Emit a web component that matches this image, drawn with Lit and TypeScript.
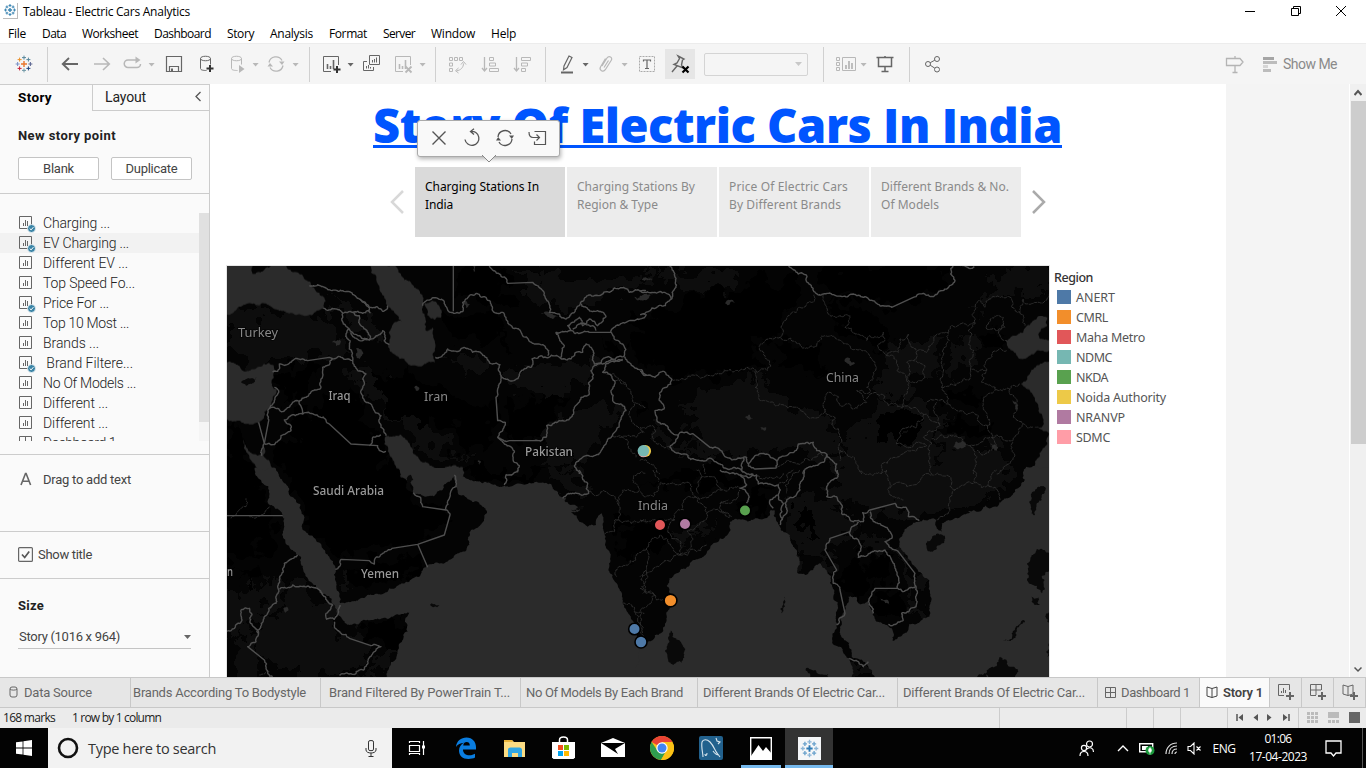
import { LitElement, html, svg, css } from "lit";
import { customElement, property } from "lit/decorators.js";

/** A single-line label whose tracking is adjusted so it spans `w` pixels. */
@customElement("fit-label")
class FitLabel extends LitElement {
  @property() text = "";
  @property({ type: Number }) w = 0;
  static styles = css`
    :host { display: inline-block; white-space: pre; }
  `;
  render() {
    return html`<span>${this.text}</span>`;
  }
  updated() {
    const s = this.renderRoot.querySelector("span") as HTMLElement;
    s.style.letterSpacing = "0px";
    const n = s.getBoundingClientRect().width;
    if (this.w && this.text.length) s.style.letterSpacing = `${((this.w - n) / this.text.length).toFixed(3)}px`;
  }
}

const t = (text: string, w: number) => html`<fit-label .text=${text} .w=${w}></fit-label>`;

/* ---------- map data, one sheet per quadrant at 3 units per pixel ---------- */
interface Sheet { at: string; sea: string[]; isle: string[]; lake: string[]; dark: string[]; lit: string[]; border: string[]; state: string[]; }

const sheets: Sheet[] = [
  {
    at: "translate(-1,-2) scale(.33333)",
    sea: [
      "0,0 78,0 80,30 110,22 130,10 135,5 180,5 185,15 215,25 235,45 258,68 285,95 300,110 295,133 262,150 225,153 190,148 165,140 130,125 105,120 75,118 40,128 15,150 0,152",
      "0,295 25,298 45,315 70,320 100,308 130,297 142,303 147,320 140,345 143,375 150,375 140,400 132,430 115,445 105,470 85,478 60,480 40,470 15,470 0,465",
      "435,0 508,0 515,15 525,30 555,55 580,80 592,110 590,130 598,160 600,200 620,190 622,215 628,240 628,297 600,300 570,305 545,298 535,285 510,275 492,262 490,235 488,205 505,175 528,172 515,155 495,135 480,110 465,85 455,60 450,35 435,25",
      "595,118 620,110 635,122 648,145 645,160 625,167 605,155",
      "480,515 525,512 545,530 555,550 570,575 590,595 620,608 650,615 690,605 712,610 712,640 525,640 505,600 490,570 475,540",
      "47,520 60,545 80,570 95,575 104,572 112,540 116,540 112,572 130,590 150,620 155,640 95,640 88,605 70,580 55,555",
    ],
    isle: ["45,355 60,345 85,348 92,340 82,358 60,365"],
    lake: ["318,235 335,228 345,232 330,245", "388,250 400,255 408,275 400,285 390,270", "565,370 572,365 580,375 570,380", "712,118 722,112 732,122 720,132", "945,150 975,150 995,158 965,158", "740,5 752,5 748,25", "1225,98 1260,92 1260,108 1240,108", "755,590 765,595 760,602"],
    dark: ["150,330 280,320 280,370 160,430", "240,420 400,400 450,500 480,560 470,640 170,640 180,520", "440,340 560,300 640,380 780,420 800,560 700,560 600,480 470,420", "640,150 700,150 790,150 860,260 760,240 660,220", "690,5 780,5 840,60 860,130 740,80 690,110", "830,400 960,380 1030,400 960,500 840,520", "1110,220 1180,230 1180,270 1120,270", "0,500 60,560 90,640 0,640"],
    lit: ["0,160 80,130 250,160 340,160 360,260 200,290 60,300 0,260", "860,40 1260,20 1260,70 1150,80 1020,160 900,60", "380,300 480,360 560,440 640,520 760,590 640,580 520,500 440,420", "640,270 760,280 800,330 700,340", "880,300 1080,290 1080,370 950,400 860,360", "970,490 1100,430 1180,430 1100,560 1000,620 940,600", "260,70 420,130 460,230 380,200 350,150"],
    border: [
      "250,65 275,62 300,72 350,80 380,92 400,105 420,120 430,130 470,142 485,125",
      "292,133 330,135 350,148 380,145 410,148 425,140 432,146 400,105",
      "350,148 352,180 370,195 360,210 370,255 380,290 395,320 420,330 410,345 415,360 405,380 415,410 440,430 465,455 465,490 480,515",
      "370,195 395,215 430,228 450,215 470,200 475,230 490,242",
      "380,145 400,155 398,175 412,190 425,205 430,228", "375,205 392,224 425,228",
      "140,325 155,322 160,300 190,298 245,290 310,280 345,280 380,290",
      "320,282 290,310 285,345 285,370 240,400 220,412 170,443 145,430 130,430",
      "220,412 230,450 175,468 195,500 165,515 145,542 115,538",
      "230,450 265,452 310,480 375,540 455,545 460,560 480,562", "430,545 440,520 465,513",
      "145,370 158,380 145,410 133,430 128,470 115,538", "98,475 115,538 108,575",
      "590,125 610,108 635,103 655,115 668,142 710,143 710,115 730,95 752,88 780,100 795,120 800,140 830,145 855,185 890,215 925,240 968,260 965,275", "682,0 682,142",
      "790,5 820,30 845,58 920,55 950,80 960,105 970,145 1000,150 1020,165 1035,150 1060,125 1085,95 1120,95 1150,85 1165,72 1210,85 1260,80",
      "628,280 655,270 665,255 715,250 740,265 775,275 800,300 822,302 825,335 850,350 880,335 915,310 918,285 945,275 1005,285",
      "825,335 815,375 810,400 815,470 838,475 830,500 815,520 835,540 865,565 865,595 880,605 875,625",
      "815,520 850,530 925,530 960,520 962,485 1000,470 1035,460 1045,430 1065,400 1090,390 1088,360 1100,345 1095,320 1130,300 1150,290 1190,285",
      "1005,285 1035,285 1050,265 1070,265 1080,240 1095,250 1105,300 1140,280 1195,275 1190,240 1165,225 1155,205 1090,205 1035,200 1025,185 1060,160 1070,185 1090,165 1115,185 1140,158 1115,140 1085,135 1065,120",
      "1040,195 1060,180 1100,185 1110,200", "1035,200 990,205 1015,245 1005,285", "1155,205 1170,185 1200,175 1235,165 1260,150",
      "1195,278 1225,310 1260,335", "1190,290 1140,300 1130,325 1165,350 1155,380 1160,410 1200,440 1180,475 1170,500 1140,540 1105,575 1070,580 1045,605 1060,630",
    ],
    state: ["1165,350 1215,390 1240,420 1260,430", "1225,420 1210,445 1225,480 1255,505", "1160,515 1190,520 1205,540 1215,560 1230,580", "1180,520 1230,520 1250,500", "1130,325 1165,330 1200,360"],
  },
  {
    at: "translate(413,-2) scale(.33333)",
    sea: [
      "1098,230 1120,215 1150,205 1175,175 1200,155 1222,160 1222,185 1195,210 1200,225 1240,235 1240,265 1190,260 1170,275 1150,285 1130,275 1110,255",
      "1240,290 1200,300 1170,330 1142,360 1170,380 1185,410 1195,440 1210,465 1205,490 1180,488 1225,505 1222,540 1205,560 1185,595 1160,640 1240,640",
    ],
    isle: [],
    lake: ["5,45 30,43 38,50 15,52", "0,95 40,92 20,108 0,108", "255,118 270,108 285,116 262,124", "615,285 630,283 645,298 632,306", "315,460 330,452 340,464 328,468", "360,490 382,488 372,500", "940,550 970,530 978,540 955,556", "1050,540 1070,540 1072,560 1058,552", "1118,408 1135,425 1128,438"],
    dark: ["100,110 380,60 500,100 430,170 410,220 350,240 380,310 240,330 100,340 0,300 0,160", "520,0 930,0 930,70 760,120 560,90", "560,120 680,160 740,250 660,220 600,200", "400,230 540,250 560,310 400,320", "720,470 780,455 840,470 830,530 740,530", "910,380 1020,400 1000,430 930,410", "1020,200 1090,200 1080,270 1020,260", "0,390 40,440 40,460 0,450", "930,460 1040,480 1040,520 940,510"],
    lit: ["120,420 340,340 480,440 560,450 600,560 440,570 380,560 260,560 140,500", "0,10 90,10 300,30 260,80 120,90 100,60", "700,410 860,420 920,500 900,600 860,640 600,640 610,540 720,430", "1090,10 1228,10 1228,90 1050,100 1000,130", "740,250 900,230 900,340 800,400 700,370", "30,480 100,520 260,590 220,600 120,560 60,540", "930,520 1100,560 1130,610 1080,640 900,640", "920,220 990,200 990,300 920,340"],
    border: [
      "85,0 100,20 108,70 95,105 50,130 0,152", "0,80 45,85 95,105",
      "445,5 475,30 500,35 515,70 528,88 550,90 610,97 640,90 680,100 710,118 755,130 820,100 880,98 920,75 945,50 932,30 940,0",
      "0,322 15,335 45,340 75,325 95,345 80,370 60,385 58,410 72,435 45,440 55,475 85,495 115,515 120,505 160,510 210,550 260,580 320,580 325,605 345,575 380,570 410,590 440,575 475,540 520,535 530,560 560,570 590,600 592,630",
      "960,5 990,14 1003,8", "115,515 90,550 130,570 180,590 230,595 270,615 305,620 310,580", "305,620 340,630", "325,605 345,615 408,612 410,590", "490,630 520,605 550,595 560,570",
    ],
    state: [
      "95,345 130,345 190,340 240,330 270,315 320,310 382,320 388,290 375,275 362,240 420,220 440,165 480,130 520,115 522,92",
      "345,320 345,370 360,410 410,425 480,435 505,460 540,455 555,435 585,460 598,510 600,560",
      "550,92 565,150 590,160 630,155 615,190 645,210 680,230 690,215 730,205 735,225 715,250 740,275 770,290 770,320 800,345 800,390 785,430",
      "420,220 480,240 530,248 545,215 590,225 620,240 660,255 690,280 705,320 680,370 690,385 650,380 670,400 680,415 640,435 600,425 570,385 555,400 555,435",
      "680,405 705,385 735,395 745,425 785,430 850,450 900,485 870,500 850,520 875,540 870,600 875,630",
      "740,275 775,265 780,225 805,210 810,240 830,262 860,265 880,235 925,205 915,250 905,300 905,370 925,420 960,440 1000,445 1050,480 1055,520 1060,550",
      "830,262 820,290 855,305 855,340 820,355 800,345 800,295 820,290", "905,370 960,355 990,345 992,315 1040,320 1025,355 1065,370 1110,375 1140,360",
      "992,315 1000,270 990,230 1005,180 1005,130 1020,110 1035,130 1090,100 1110,100 1115,130 1140,145 1150,105 1165,120 1228,90",
      "925,205 960,180 1005,175", "1040,195 1050,165 1070,155 1090,160 1095,190 1070,200 1040,195", "1090,180 1075,200 1085,225 1103,235", "1140,145 1155,185", "1040,320 1040,290 1100,260",
      "1065,370 1030,400 1030,430 1050,480", "1110,375 1130,430 1120,460 1150,480 1180,488", "1150,480 1115,540 1120,580 1090,610 1070,630",
      "850,450 830,490 780,510 770,540 800,550 860,545 830,560 780,575 725,600 725,630", "875,525 940,515 990,545 1055,520 1115,530", "990,545 1005,590 1000,630", "1060,550 1010,560",
      "600,560 620,570 650,600 665,630", "600,560 600,590", "0,490 30,485 40,530 90,550", "860,415 915,415 925,420", "890,415 880,440 900,485", "0,590 30,600 60,630", "190,600 195,630", "410,610 470,600 520,580 550,575",
    ],
  },
  {
    at: "translate(-1,204) scale(.33333)",
    sea: [
      "520,-6 700,-6 712,20 750,33 790,38 835,47 870,42 905,42 960,38 975,42 980,55 995,65 1000,78 1020,82 1015,92 1035,105 1075,108 1060,122 1035,128 1060,155 1085,170 1110,165 1120,135 1127,130 1130,165 1138,220 1150,290 1172,340 1190,400 1215,440 1235,480 1245,520 1275,545 1275,640 463,640 490,590 515,540 545,485 550,428 530,432 500,440 470,445 440,450 400,460 370,465 350,450 335,430 325,402 342,400 395,392 440,375 490,355 550,335 580,320 600,292 655,280 695,250 730,225 732,195 735,180 750,175 775,145 783,125 770,110 755,95 725,88 700,75 690,50 684,18 650,60 625,78 600,80 565,75 545,35 530,22",
      "85,-6 148,-6 160,20 175,40 190,75 210,90 225,120 228,165 245,190 270,210 290,235 310,260 328,290 330,335 340,375 342,402 325,405 300,375 270,345 245,325 232,300 225,260 200,240 178,215 175,170 165,125 132,105 130,75 105,30",
    ],
    isle: ["545,20 555,15 562,30 560,65 548,62 542,40", "612,405 625,402 640,406 625,410", "1035,118 1065,118 1075,108 1050,124"],
    lake: ["172,415 182,410 188,420 178,428", "325,420 340,420 335,430"],
    dark: ["170,0 520,0 560,80 660,140 640,190 480,230 340,260 240,160", "0,0 80,0 130,110 150,230 0,260", "420,460 540,440 540,480 480,540 400,500", "350,300 560,260 570,310 400,360", "0,280 110,320 80,360 0,340", "1190,150 1260,170 1260,260 1180,280", "700,0 960,0 950,35 790,30"],
    lit: ["0,380 80,340 150,330 150,400 90,480 0,480", "160,360 260,355 330,470 440,540 390,600 180,620 100,560 110,450", "0,490 60,480 80,560 120,630 0,630", "335,300 360,300 400,370 350,390", "240,80 270,150 330,240 270,200", "460,560 520,520 500,590 430,630 380,630", "980,0 1060,0 1080,60 1020,70"],
    border: [
      "3,137 170,137", "835,45 840,15 875,0", "562,68 590,110 660,120 672,135 655,195 575,223 498,235 470,250 445,282 430,272 345,268 340,290 328,298", "575,223 605,292", "660,120 670,85 680,55 690,50 685,15",
      "215,255 175,280 160,330 158,360 150,400 115,440 95,480 90,515 65,530 115,570 120,595 140,620", "160,357 200,345 260,352 290,375 320,405 300,430 302,448 325,448 342,405",
      "325,455 345,490 370,505 435,527 465,530 425,575 388,612 340,615", "0,483 15,482 48,450 45,420 70,415 72,455 95,490", "1010,85 1055,70 1088,70 1085,40 1065,10 1060,0",
    ],
    state: ["15,145 35,125 60,110 60,85", "70,140 95,140 130,110", "1088,62 1140,65 1178,105 1165,150 1165,185 1135,190", "1175,150 1215,160 1260,150", "1178,105 1190,60 1240,60 1220,30 1260,10", "1260,240 1230,270 1200,285 1175,295 1172,320", "1190,400 1225,425 1255,430", "1260,300 1245,330 1250,370", "1225,425 1240,460 1250,490", "100,615 130,605"],
  },
  {
    at: "translate(413,204) scale(.33333)",
    sea: [
      "-3,545 0,535 20,520 45,495 55,495 75,465 80,450 85,420 95,400 90,370 88,325 110,310 145,290 165,270 200,250 215,225 240,205 262,195 272,180 270,155 300,148 345,145 390,135 392,120 405,122 408,150 420,170 450,195 458,225 470,240 478,270 472,308 495,315 540,280 560,300 570,340 580,380 592,420 590,465 578,490 582,525 600,530 615,555 630,565 640,600 640,640 -3,640",
      "625,380 650,380 655,400 675,400 685,390 698,425 710,455 740,465 755,475 758,512 780,500 805,480 808,462 840,455 868,440 873,395 870,365 845,310 815,280 785,240 778,220 790,190 805,170 838,155 865,150 888,150 890,175 905,185 905,160 925,150 985,130 1010,125 1070,110 1090,90 1120,70 1140,50 1155,30 1158,-10 1240,-10 1240,640 725,640 695,600 670,575 640,565 635,540 610,505 600,480 605,465 600,440 615,420 622,400",
    ],
    isle: [
      "92,482 115,510 133,545 125,578 100,585 85,570 80,530 85,500", "858,220 880,197 915,197 910,220 880,243 860,235", "1172,75 1195,50 1210,48 1205,90 1185,135 1168,95",
      "1175,255 1190,238 1240,243 1240,300 1205,320 1205,370 1180,345 1162,310", "1040,600 1080,560 1110,590 1135,605 1120,640 1040,640", "1090,512 1125,480 1150,450 1155,455 1130,485 1100,510",
      "498,595 525,600 565,612 567,640 505,640", "433,380 434,400 430,420 424,430 429,405", "1173,380 1195,382 1200,405 1185,405", "1228,425 1220,430 1222,455 1230,460", "1226,520 1218,545 1222,560 1230,560",
      "995,640 1015,615 1040,610 1040,640",
    ],
    lake: ["720,385 735,390 748,405 735,400", "985,125 1005,122 1005,128"],
    dark: ["480,110 520,110 520,180 490,200", "670,260 735,250 765,300 750,340 680,340", "20,30 160,0 290,20 260,60 160,70", "0,170 90,160 100,200 20,240", "710,370 820,370 780,430 720,430", "300,70 400,60 380,130 330,140", "600,310 670,300 680,390 610,380"],
    lit: ["440,90 580,60 640,160 560,210 590,300 560,290 530,270 480,250 430,170", "570,0 1130,0 1080,90 880,140 700,110 600,90", "640,160 740,200 820,310 860,330 850,440 790,450 820,370 760,240 660,240", "100,170 250,160 190,220 120,240", "90,500 120,540 110,570 92,560", "870,210 900,205 890,230 870,230", "1180,260 1220,250 1215,300 1180,300", "645,570 690,600 700,640 650,640"],
    border: [
      "240,0 300,15 350,15 355,42 415,45 415,75 390,90 400,115", "300,15 320,45 300,55 325,75 320,100",
      "592,0 590,25 560,50 560,80 590,80 605,105 605,130 640,155 670,155 668,128 690,120 765,100 800,115 805,140 838,152",
      "493,0 480,60 440,90 440,130 425,150 420,165", "415,75 430,100 425,150", "655,155 630,185 570,205 555,240 590,300 580,340 600,360 615,430 590,465",
      "630,185 640,205 655,210 655,262 690,250 735,240 755,270 775,320 772,355 705,355 688,385 700,430", "690,125 700,155 750,185 755,205 735,215 775,245 825,310 828,350 790,365 772,355",
      "828,350 828,410 785,430 790,450 745,463", "628,565 655,575 670,590 685,575",
    ],
    state: [
      "0,65 40,80 60,40 100,40 155,50 165,80 215,75 240,60 300,55", "165,80 130,90 130,120 105,130 95,205 120,255", "0,150 50,155 105,150", "165,80 200,130 180,160 140,180 155,200 150,235 120,255",
      "120,255 60,285 20,310 0,320", "120,255 200,225", "20,310 20,240 40,205 80,205 95,230 120,255", "0,355 45,375 50,390 70,390", "45,375 20,410 0,425", "200,130 250,125 270,140", "170,0 180,30 175,70",
      "740,0 750,40 750,75 790,90", "750,55 820,45 880,15 930,20 930,50 945,60 930,120 890,150", "945,60 1000,40 1050,50 1080,90", "1000,0 1005,40", "1050,50 1070,0", "660,5 700,15 740,0", "480,0 450,30 440,70", "40,0 55,35",
      "350,15 400,25 430,10", "415,45 440,30 460,0", "20,310 5,350 20,370 45,375", "5,430 12,500", "245,60 215,20 180,25", "240,100 300,60", "275,140 240,100 265,90",
    ],
  },
];

type P = [number, number];
const noise = (a: number, b: number) => {
  const v = Math.sin(a * 12.9898 + b * 78.233) * 43758.5453;
  return (v - Math.floor(v)) * 2 - 1;
};
/** Midpoint displacement: turns coarse vertices into a ragged natural line. */
const ragged = (src: string, amp: number, maxLen: number, closed: boolean) => {
  const ps = src.split(" ").map((q) => q.split(",").map(Number) as P);
  if (closed) ps.push(ps[0]);
  const out: P[] = [ps[0]];
  const walk = (a: P, b: P, d: number) => {
    const dx = b[0] - a[0], dy = b[1] - a[1], len = Math.hypot(dx, dy);
    if (d === 0 || len < 5) { out.push(b); return; }
    const k = noise(a[0] + b[0], a[1] + b[1]) * amp;
    const m: P = [(a[0] + b[0]) / 2 - dy * k, (a[1] + b[1]) / 2 + dx * k];
    walk(a, m, d - 1);
    walk(m, b, d - 1);
  };
  for (let i = 1; i < ps.length; i++) {
    const len = Math.hypot(ps[i][0] - ps[i - 1][0], ps[i][1] - ps[i - 1][1]);
    walk(ps[i - 1], ps[i], len > maxLen ? 0 : 4);
  }
  return out.map((p) => `${p[0].toFixed(1)},${p[1].toFixed(1)}`).join(" ");
};

const pts = (list: string[], cls: string) => list.map((p) => svg`<polygon class=${cls} points=${ragged(p, cls === "sea" ? 0.2 : 0.28, 140, true)} />`);
const lines = (list: string[], cls: string) => list.map((p) => svg`<polyline class=${cls} points=${ragged(p, cls === "state" ? 0.27 : 0.2, cls === "state" ? 90 : 62, false)} />`);

const names: [string, number, number, number, string][] = [
  ["Turkey", 11, 71, 40, "nm"], ["Iraq", 101.5, 133.5, 22, "nm hi"], ["Iran", 197, 135, 24, "nm"], ["Pakistan", 298, 189.5, 48, "nm hi"],
  ["Saudi Arabia", 86, 229, 71, "nm hi"], ["Yemen", 134, 311.5, 38, "nm hi"], ["India", 411, 243.5, 30, "nm"], ["China", 599, 115.5, 33, "nm"], ["n", 0, 310, 6, "nm hi"],
];
const marks: [number, number, number, string][] = [
  [433, 259, 5, "#e15759"], [458, 258, 5, "#b07aa1"], [518, 244.5, 5, "#59a14f"], [443.5, 334.5, 5.6, "#f28e2b"], [407.5, 363, 5, "#4e79a7"], [414, 376, 5.2, "#4e79a7"],
];

@customElement("world-map")
class WorldMap extends LitElement {
  static styles = css`
    :host { display: block; width: 822px; height: 411px; overflow: hidden; background: #040404; }
    svg { display: block; }
    .sea { fill: #2b2b2b; }
    .isle { fill: #090909; }
    .lake { fill: #2b2b2b; }
    .dark { fill: #000; }
    .lit { fill: #0d0d0d; }
    .border { fill: none; stroke: #4f4f4f; stroke-width: 4.2; stroke-linejoin: round; }
    .state { fill: none; stroke: #303030; stroke-width: 2.8; stroke-dasharray: 12 2; }
    .nm { font: 13px "Noto Sans", sans-serif; fill: #888; stroke: #000; stroke-width: 2px; paint-order: stroke; stroke-opacity: .5; }
    .hi { fill: #999; font-weight: 500; }
    .mark { stroke: #000; stroke-width: 1.6; }
  `;
  render() {
    return html`<svg width="822" height="411" viewBox="0 0 822 411">
      <defs>
        <filter id="hills" filterUnits="userSpaceOnUse" x="-20" y="-20" width="870" height="450">
          <feTurbulence type="fractalNoise" baseFrequency="0.05" numOctaves="3" seed="9" result="n" />
          <feDisplacementMap in="SourceGraphic" in2="n" scale="45" xChannelSelector="R" yChannelSelector="G" />
        </filter>
      </defs>
      <g filter="url(#hills)">${sheets.map((s) => svg`<g transform=${s.at}>${pts(s.lit, "lit")}${pts(s.dark, "dark")}</g>`)}</g>
      ${sheets.map((s) => svg`<g transform=${s.at}>${pts(s.sea, "sea")}</g>`)}
      ${sheets.map((s) => svg`<g transform=${s.at}>${pts(s.isle, "isle")}${pts(s.lake, "lake")}${lines(s.state, "state")}${lines(s.border, "border")}</g>`)}
      ${names.map(([n, x, y, w, c]) => svg`<text class=${c} x=${x} y=${y} textLength=${w} lengthAdjust="spacingAndGlyphs">${n}</text>`)}
      <circle cx="417" cy="185" r="7" fill="#000" />
      <circle cx="418.2" cy="185" r="5.9" fill="#edc948" />
      <circle cx="416.3" cy="186" r="5.2" fill="#ff9da7" />
      <circle cx="416.4" cy="184.8" r="5.8" fill="#76b7b2" />
      ${marks.map(([x, y, r, c]) => svg`<circle class="mark" cx=${x} cy=${y} r=${r + 0.8} fill=${c} />`)}
    </svg>`;
  }
}

/* ---------- icons ---------- */
const ic = (body: unknown, w = 20, h = 20) => html`<svg width=${w} height=${h} viewBox="0 0 ${w} ${h}" fill="none" stroke="currentColor">${body}</svg>`;
const plus = (x: number, y: number, r: number, c: string, w = 1.3) => svg`<path d="M${x - r} ${y}h${r * 2}M${x} ${y - r}v${r * 2}" stroke=${c} stroke-width=${w} />`;
const logo = (cs: string[], big = 1) => ic(svg`
  ${plus(10, 10, 3, cs[0], 1.4 * big)}${plus(10, 3.6, 2, cs[1], big)}${plus(10, 16.4, 2, cs[2], big)}
  ${plus(3.6, 10, 2, cs[3], big)}${plus(16.4, 10, 2, cs[4], big)}
  ${plus(5.6, 5.6, 2, cs[5], big)}${plus(14.4, 5.6, 2, cs[6], big)}${plus(5.6, 14.4, 2, cs[7], big)}${plus(14.4, 14.4, 2, cs[8], big)}`);
const blue = Array(9).fill("#3f87b3");
const mixed = ["#e8762d", "#59879b", "#7099a6", "#7b91c7", "#5b6591", "#eb912c", "#59879b", "#c72037", "#1f447e"];

const caret = (cls = "") => html`<span class="cell caret ${cls}">${ic(svg`<path d="M.6 0h6L3.6 3.6z" fill="currentColor" stroke="none" />`, 7, 4)}</span>`;
const cell = (body: unknown, cls = "") => html`<span class="cell ${cls}">${body}</span>`;
const sep = html`<span class="cell"><i class="sep"></i></span>`;
const db = svg`<path d="M4.500 4.500c0-3 10-3 10 0s-10 3-10 0v10c0 1.600 3 2 6 2M14.500 4.500v6" />`;
const chart = svg`<path d="M10 17.500H2.500v-15h15V11" /><path d="M6.500 10v5M9.500 12v3M12.500 6v9" stroke-width="1.600" />`;

const icons = {
  back: ic(svg`<path d="M2.500 10H18M9 4l-6.300 6L9 16" stroke-width="1.800" />`),
  fwd: ic(svg`<path d="M2 10h15.500M11 4l6.300 6-6.300 6" stroke-width="1.600" />`),
  redo: ic(svg`<path d="M15 6H5a3.700 3.700 0 000 7.500h9a3.500 3.500 0 003.500-3.500" stroke-width="1.500" /><path d="M12.500 2.500l5 3.500-5 3.500z" fill="currentColor" stroke="none" />`),
  save: ic(svg`<path d="M2.500 2.500h15v15h-15zM5.500 17.500v-5h9v5" stroke-width="1.200" /><path d="M8 14.500v3" stroke-width="2" />`),
  dbAdd: ic(svg`${db}<path d="M14 11v7M10.500 14.500h7" stroke="#333" stroke-width="2" />`),
  dbRun: ic(svg`${db}<path d="M12 11l5.500 4-5.500 4z" fill="currentColor" stroke="none" />`),
  sync: ic(svg`<path d="M3 8.500a7 7 0 0113-2M17 11.500a7 7 0 01-13 2" stroke-width="1.300" /><path d="M13 7.500h5.500l-2.500 3.500zM1.500 12.500h5.500l-3-3.500z" fill="currentColor" stroke="none" />`),
  sheet: ic(svg`${chart}<path d="M16 12v7M12.500 15.500h7" stroke="#333" stroke-width="2" />`),
  dup: ic(svg`<path d="M8.500 1.500h10v9h-10z" /><path d="M6 7.500H2.500v9h10V13" /><path d="M11.500 6v2.500M13.500 5v3.500M15.500 3.500v5M5.500 12v2.500M7.500 11v3.500M9.500 13v1.500" />`),
  clear: ic(svg`${chart}<path d="M12.500 12.500l6 6M18.500 12.500l-6 6" stroke-width="1.800" />`),
  swap: ic(svg`<path d="M2.500 3.500h3v3h-3zM7.500 3.500h3v3h-3zM12.500 3.500h3v3h-3zM2.500 9h3v3h-3zM2.500 14.500h3v3h-3z" /><path d="M16.500 9.500c0 4-3 7-7 7.200" /><path d="M14 10.500l2.500-3 2.500 3M11.500 14l-3 2.700 3 2.300" />`),
  asc: ic(svg`<path d="M4.500 3v14M2 14l2.500 3L7 14" stroke-width="1.300" /><path d="M9.500 3.500h4v3h-4zM9.500 9h6v3h-6zM9.500 14.500h9v3h-9z" />`),
  desc: ic(svg`<path d="M4.500 3v14M2 14l2.500 3L7 14" stroke-width="1.300" /><path d="M9.500 3.500h9v3h-9zM9.500 9h6v3h-6zM9.500 14.500h4v3h-4z" />`),
  pen: ic(svg`<path d="M12 2l3 1.500-5 10-3.500 2.200.5-3.700z" stroke-width="1.200" /><path d="M4 18.500h12" stroke-width="2" />`),
  clip: ic(svg`<path d="M6 12l5-8c2-3 6-.5 4.300 2.200l-6 9.500c-2 3-6.500.5-4.800-2.700l5-8.500M8 13.500l4.500-7" stroke-width="1.200" />`),
  text: ic(svg`<path d="M2.500 2.500h15v15h-15z" stroke-dasharray="2 1" stroke="#aaa" /><path d="M6.500 7.500V6h7v1.500M10 6v8M8 14.500h4" stroke-width="1.200" />`),
  pin: ic(svg`<path d="M8 2l6 3-1.500 1-1 5 1.500 3-9-3.500 3-1.500 2.500-4.500zM7 12l-5 6" stroke-width="1.400" /><path d="M12.500 12.500l6 6M18.500 12.500l-6 6" stroke="#000" stroke-width="2.200" />`),
  cards: ic(svg`<path d="M.5 3.500h3v3h-3zM.5 8.500h3v3h-3zM.5 13.500h3v3h-3zM6.500 3.500h13v13h-13z" /><path d="M10 11v4M13 7v8M16 9v6" stroke-width="1.800" />`),
  present: ic(svg`<path d="M1.500 3.500h17M3.500 3.500v9h13v-9M10 2v2M10 12.500v5M6.500 17.500h7" stroke-width="1.500" />`),
  share: ic(svg`<circle cx="5" cy="10" r="2.500" /><circle cx="14" cy="5" r="2.500" /><circle cx="14" cy="15.500" r="2.500" /><path d="M7.200 8.700l4.600-2.500M7.200 11.200l4.600 3" />`),
  sign: ic(svg`<path d="M1.500 4.500H15l3 3.500-3 3.500H1.500zM10 2v2.500M10 11.500v6.500M7.500 18.500h5" stroke="#b4b4b4" stroke-width="1.300" />`),
  showme: ic(svg`<path d="M0 3.500h11" stroke="#a5a5a5" stroke-width="3" /><path d="M0 7.500h14M0 15.500h8" stroke="#bcbcbc" stroke-width="3" /><path d="M0 11.500h5" stroke="#d6d6d6" stroke-width="3" />`, 14, 18),
};

const row = (kind: "sheet" | "dash", used: boolean) => ic(svg`<path d="M.5 .5h12v12h-12z" stroke="#666" />
  ${kind === "sheet" ? svg`<path d="M4.500 7v3M6.500 4v6M8.500 5v5" stroke="#666" />` : svg`<path d="M6.500 0v13M0 6.500h13" stroke="#666" />`}
  ${used ? svg`<circle cx="12.500" cy="12.500" r="4" fill="#3a84a6" stroke="#fafafa" stroke-width=".8" /><path d="M10.700 12.500l1.400 1.400 2.300-2.700" stroke="#fff" />` : ""}`, 17, 17);

const sheetsList: [string, number, boolean, "sheet" | "dash"][] = [
  ["Charging ...", 67, true, "sheet"], ["EV Charging ...", 86, true, "sheet"], ["Different EV ...", 85, false, "sheet"], ["Top Speed Fo...", 92, false, "sheet"],
  ["Price For ...", 66, true, "sheet"], ["Top 10 Most ...", 86, false, "sheet"], ["Brands ...", 56, false, "sheet"], [" Brand Filtere...", 90, true, "sheet"],
  ["No Of Models ...", 93, false, "sheet"], ["Different ...", 65, false, "sheet"], ["Different ...", 65, false, "sheet"], ["Dashboard 1", 73, false, "dash"],
];

const legend: [string, number, string][] = [
  ["ANERT", 39, "#4e79a7"], ["CMRL", 32, "#f28e2b"], ["Maha Metro", 69, "#e15759"], ["NDMC", 36, "#76b7b2"],
  ["NKDA", 32, "#59a14f"], ["Noida Authority", 90, "#edc948"], ["NRANVP", 49, "#b07aa1"], ["SDMC", 34, "#ff9da7"],
];

const points: [string, number, string, number][] = [
  ["Charging Stations In", 114, "India", 28], ["Charging Stations By", 118, "Region & Type", 81],
  ["Price Of Electric Cars", 119, "By Different Brands", 112], ["Different Brands & No.", 128, "Of Models", 58],
];
const menus: [string, number][] = [["File", 18], ["Data", 24], ["Worksheet", 56], ["Dashboard", 57], ["Story", 27], ["Analysis", 43], ["Format", 38], ["Server", 32], ["Window", 44], ["Help", 25]];

const book = svg`<path d="M6 2.500v9M6 2.500L1 1v9l5 1.500 5-1.500V1z" />`;

@customElement("app-root")
class AppRoot extends LitElement {
  static styles = css`
    :host { display: flex; flex-direction: column; width: 1366px; height: 768px; overflow: hidden; background: #fff; color: #333; --seg: "Open Sans", "Noto Sans", sans-serif; --ben: Roboto, "Open Sans", sans-serif; font: 13px var(--ben); }
    * { box-sizing: border-box; }
    svg { display: block; flex: none; }
    .titlebar { display: flex; align-items: center; height: 22px; padding-left: 3px; font: 12px var(--seg); color: #000; gap: 5px; }
    .appicon { width: 15px; height: 16px; border-right: 1px solid #bbb; border-bottom: 1px solid #bbb; overflow: hidden; }
    .appicon svg { width: 14px; height: 14px; }
    .wins { display: flex; margin-left: auto; padding-right: 2px; }
    .wins span { width: 45.500px; display: grid; place-items: center; }
    .menu { display: flex; align-items: center; gap: 16px; height: 21px; padding: 2px 0 0 8px; font: 12px var(--seg); color: #000; }
    .toolbar { display: grid; height: 41px; padding-left: 7px; align-items: center; background: #f5f5f5; border-top: 1px solid #ececec; color: #666;
      grid-template-columns: 33px 14px 32px 32px 30px 10px 32px 32px 30px 8px 32px 12px 10px 33px 8px 32px 32px 10px 12px 32px 33px 32px 14px 30px 8px 31px 10px 32px 34px 118px 16px 29px 9px 32px 16px 32px 1fr 32px 115px; }
    .cell { display: flex; align-items: center; justify-content: center; }
    .caret { justify-content: flex-start; padding-top: 1px; }
    .off { color: #b8b8b8; }
    .sep { width: 1px; height: 35px; background: #d0d0d0; }
    .on { height: 30px; width: 30px; background: #e6e6e6; margin: 0 2px; }
    .combo { width: 104px; height: 23px; border: 1px solid #d4d4d4; border-radius: 2px; display: flex; align-items: center; justify-content: flex-end; padding-right: 5px; color: #c8c8c8; }
    .show { justify-content: flex-start; padding-left: 12px; gap: 6px; font-size: 14px; color: #8a8a8a; }
    .main { display: flex; height: 593px; }
    .side { width: 210px; background: #fafafa; border-right: 1px solid #ccc; border-top: 1px solid #ccc; display: flex; flex-direction: column; }
    .tabs { display: flex; height: 26px; line-height: 25px; font-size: 14px; }
    .tabs b { width: 92px; padding-left: 18px; color: #000; font-size: 13.500px; }
    .lay { flex: 1; border-left: 1px solid #ccc; border-bottom: 1px solid #ccc; padding: 0 6px 2px 12px; display: flex; justify-content: space-between; align-items: center; color: #222; line-height: 24px; }
    .newpt { height: 83px; border-bottom: 1px solid #ccc; padding: 16px 0 0 18px; color: #222; }
    .newpt b { display: block; height: 30px; line-height: 18px; }
    .btns { display: flex; gap: 12px; }
    .btns span { width: 81px; height: 23px; border: 1px solid #c4c4c4; border-radius: 2px; background: #fff; display: grid; place-items: center; color: #444; padding-bottom: 1px; }
    .list { display: flex; margin-top: 19px; height: 228px; overflow: hidden; }
    .items { flex: 1; }
    .item { height: 20px; display: flex; align-items: center; padding: 2px 0 0 19px; gap: 7px; font-size: 14px; color: #505050; white-space: pre; }
    .item fit-label { margin-top: -2px; font-weight: 300; color: #222; }
    .hov { background: #f2f2f2; }
    .bar { width: 10px; background: #f5f5f5; }
    .thumb { height: 209px; background: #e0e0e0; }
    .drag { margin-top: 13px; height: 78px; border-top: 1px solid #ccc; border-bottom: 1px solid #ccc; display: flex; align-items: flex-start; padding: 17px 0 0 20px; color: #444; }
    .drag i { width: 23px; }
    .ttl { height: 47px; border-bottom: 1px solid #ccc; display: flex; align-items: center; padding: 0 0 1px 18px; gap: 5px; color: #444; }
    .size { padding: 18px 0 0 18px; }
    .size b { display: block; line-height: 18px; color: #222; }
    .sel { display: flex; justify-content: space-between; align-items: center; width: 173px; height: 24px; margin-top: 10px; border-bottom: 1px solid #c4c4c4; color: #444; padding-left: 1px; }
    .page { width: 1016px; background: #fff; position: relative; }
    .head { height: 83px; padding: 6px 0 0 163px; font: 800 47px/70px "Open Sans", sans-serif; color: #0055ff; }
    .head fit-label { text-decoration: underline; text-decoration-thickness: 3px; text-underline-offset: 2px; text-decoration-skip-ink: none; }
    .nav { display: flex; align-items: center; padding-left: 179px; height: 70px; }
    .nav > svg { margin-bottom: 1px; }
    .pts { display: flex; gap: 2px; margin: 0 9px 0 11px; }
    .pt { width: 150px; height: 70px; background: #ececec; color: #8a8a8a; font: 12px/18px "Noto Sans", sans-serif; padding: 11px 0 0 10px; display: flex; flex-direction: column; }
    .cur { background: #dadada; color: #000; }
    .body { display: flex; margin-top: 28px; padding-left: 16px; height: 412px; overflow: hidden; }
    .map { border: 1px solid #e6e6e6; border-bottom: 0; height: 412px; flex: none; overflow: hidden; }
    .leg { padding: 4px 0 0 4px; font: 12.500px "Noto Sans", sans-serif; color: #555; }
    .leg p { margin: 0; height: 18px; line-height: 18px; color: #333; font-weight: 500; }
    .key { height: 20px; display: flex; align-items: center; padding-left: 3px; gap: 5px; }
    .sw { width: 14px; height: 14px; }
    .pop { position: absolute; left: 207px; top: 36px; width: 143px; height: 37px; background: #f9f9f9; border: 1.500px solid #aaa; border-radius: 3px; box-shadow: 1px 2px 4px rgba(0,0,0,.3); display: flex; align-items: center; justify-content: space-around; padding: 0 4px 2px; color: #555; }
    .tip { position: absolute; left: 64px; top: 34px; }
    .gray { flex: 1; background: #f4f4f4; }
    .scroll { width: 17px; border-left: 1px solid #fff; background: #f0f0f0; display: flex; flex-direction: column; align-items: center; justify-content: space-between; }
    .scroll .th { width: 15px; height: 343px; background: #cdcdcd; margin-bottom: auto; }
    .scroll svg { margin: 5px 0 5px; }
    .scroll .dn { margin: 4px 0; }
    .sheets { display: grid; height: 31px; border-top: 1px solid #c8c8c8; border-bottom: 1px solid #c8c8c8; background: #e6e6e6; grid-template-columns: 131px 190px 200px 177px 200px 200px 102px 70px 32px 32px 32px; color: #666; }
    .sheets > span { border-right: 1px solid #c8c8c8; display: flex; align-items: center; gap: 5px; padding-left: 5px; overflow: hidden; }
    .sheets .a { padding-left: 2px; } .sheets .b { padding-left: 8px; }
    .sheets .dash { padding-left: 7px; }
    .sheets .act { background: #fafafa; color: #444; font-weight: 600; padding-left: 6px; }
    .sheets .act fit-label { margin-bottom: 1px; }
    .sheets .src { padding-left: 9px; }
    .sheets .add { padding-left: 8px; }
    .status { display: grid; height: 20px; background: #ebebeb; grid-template-columns: 1000px 127px 27px 27px 47px 71px 67px; font: 12px var(--seg); color: #222; }
    .status > span { border-right: 1px solid #ccc; display: flex; align-items: center; }
    .status > span:last-child { border: 0; }
    .status .l { padding-left: 3px; padding-bottom: 1px; gap: 17px; }
    .status .n { justify-content: space-between; padding: 0 8px 2px 8px; }
    .status .v { justify-content: space-between; padding: 0 6px 1px 8px; }
    .task { display: flex; height: 40px; background: #030303; color: #fff; font: 12px var(--seg); align-items: stretch; }
    .task .start { width: 48px; display: grid; place-items: center; }
    .search { width: 344px; background: #f2f2f2; color: #333; display: flex; align-items: center; padding: 0 15px 0 8px; font-size: 14.500px; }
    .search fit-label { margin-left: 8px; flex: 1; }
    .app { width: 49px; display: grid; place-items: center; }
    .run { border-bottom: 3px solid #76b9ed; width: 40px; margin: 0 4px 0 6px; padding-top: 3px; }
    .live { background: #333; border-bottom: 3px solid #76b9ed; width: 48px; padding-top: 3px; }
    .tray { margin-left: auto; display: grid; grid-template-columns: 46px 26px 22px 26px 20px 40px 68px 42px 12px; width: 302px; align-items: center; justify-items: center; }
    .clock { display: flex; flex-direction: column; align-items: center; line-height: 18px; }
    .edge { justify-self: end; margin-right: 3px; width: 1px; height: 40px; background: #555; }
  `;

  render() {
    return html`
      <div class="titlebar">
        <span class="appicon">${logo(blue, 1.5)}</span>${t("Tableau - Electric Cars Analytics", 167)}
        <div class="wins">
          <span>${ic(svg`<path d="M0 5.500h10" stroke="#000" />`, 10, 10)}</span>
          <span>${ic(svg`<path d="M.5 2.500h7v7h-7zM2.500 2.500v-2h7v7h-2" stroke="#000" />`, 10, 10)}</span>
          <span>${ic(svg`<path d="M0 0l10 10M10 0L0 10" stroke="#000" />`, 10, 10)}</span>
        </div>
      </div>
      <div class="menu">${menus.map(([m, w]) => t(m, w))}</div>
      <div class="toolbar">
        ${cell(logo(mixed))}${sep}${cell(icons.back)}${cell(icons.fwd, "off")}${cell(icons.redo, "off")}${caret("off")}
        ${cell(icons.save)}${cell(icons.dbAdd)}${cell(icons.dbRun, "off")}${caret("off")}${cell(icons.sync, "off")}${caret("off")}${sep}
        ${cell(icons.sheet)}${caret()}${cell(icons.dup)}${cell(icons.clear, "off")}${caret("off")}${sep}
        ${cell(icons.swap, "off")}${cell(icons.asc, "off")}${cell(icons.desc, "off")}${sep}
        ${cell(icons.pen)}${caret()}${cell(icons.clip, "off")}${caret("off")}${cell(icons.text)}${cell(icons.pin, "on")}
        <span class="cell"><span class="combo">${ic(svg`<path d="M0 0h7L3.500 4z" fill="currentColor" stroke="none" />`, 7, 4)}</span></span>${sep}
        ${cell(icons.cards, "off")}${caret("off")}${cell(icons.present)}${sep}${cell(icons.share)}
        <span></span>${cell(icons.sign)}<span class="cell show">${icons.showme}${t("Show Me", 54)}</span>
      </div>
      <div class="main">
        <div class="side">
          <div class="tabs"><b>${t("Story", 34)}</b><div class="lay">${t("Layout", 41)}${ic(svg`<path d="M5.500 1L1 5.500 5.500 10" stroke="#555" stroke-width="1.300" />`, 8, 11)}</div></div>
          <div class="newpt"><b>${t("New story point", 98)}</b><div class="btns"><span>${t("Blank", 31)}</span><span>${t("Duplicate", 52)}</span></div></div>
          <div class="list">
            <div class="items">${sheetsList.map(([n, w, u, k], i) => html`<div class="item ${i === 1 ? "hov" : ""}">${row(k, u)}${t(n, w)}</div>`)}</div>
            <div class="bar"><div class="thumb"></div></div>
          </div>
          <div class="drag"><i>${ic(svg`<path d="M1 13L5.500 1.500h.6L10.600 13M2.500 9.200h6.500" stroke="#666" stroke-width="1.600" />`, 12, 16)}</i>${t("Drag to add text", 88)}</div>
          <div class="ttl">${ic(svg`<rect x=".6" y=".6" width="13.800" height="13.800" rx="1" stroke="#666" stroke-width="1.200" /><path d="M4 7.500l2.700 3 4.500-6" stroke="#555" stroke-width="1.700" />`, 15, 15)}${t("Show title", 54)}</div>
          <div class="size"><b>${t("Size", 26)}</b><div class="sel">${t("Story (1016 x 964)", 101)}${ic(svg`<path d="M0 0h7L3.500 4z" fill="#666" stroke="none" />`, 7, 4)}</div></div>
        </div>
        <div class="page">
          <div class="head">${t("Story Of Electric Cars In India", 689)}</div>
          <div class="nav">
            ${ic(svg`<path d="M14 2L3 13l11 11" stroke="#d8d8d8" stroke-width="2.500" />`, 15, 26)}
            <div class="pts">${points.map(([a, aw, b, bw], i) => html`<div class="pt ${i ? "" : "cur"}">${t(a, aw)}${t(b, bw)}</div>`)}</div>
            ${ic(svg`<path d="M3 2l11 11L3 24" stroke="#aaa" stroke-width="2.500" />`, 17, 26)}
          </div>
          <div class="body">
            <div class="map"><world-map></world-map></div>
            <div class="leg"><p>${t("Region", 39)}</p>${legend.map(([n, w, c]) => html`<div class="key"><i class="sw" style="background:${c}"></i>${t(n, w)}</div>`)}</div>
          </div>
          <div class="pop">
            ${ic(svg`<path d="M3.500 3.500l13 13M16.500 3.500l-13 13" stroke-width="1.400" />`)}
            ${ic(svg`<path d="M8.500 3.500a7 7 0 11-5.500 8M12 .8L8.500 3.500 12 6.500" stroke-width="1.300" />`)}
            ${ic(svg`<path d="M3 9a7 7 0 0113-3M17 11a7 7 0 01-13 3" stroke-width="1.300" /><path d="M14 7.500h5l-2.200 3.500zM1 12.500h5L3.200 9z" fill="currentColor" stroke="none" />`)}
            ${ic(svg`<path d="M6.500 3.500h11v13h-11v-3M1 4c0 4 2 5.500 4 5.500h6M8.500 6.500l3 3-3 3" stroke-width="1.200" />`)}
            <svg class="tip" width="14" height="8" viewBox="0 0 14 8"><path d="M0 0h14L7 7z" fill="#f9f9f9" /><path d="M0 0l7 7 7-7" fill="none" stroke="#888" /></svg>
          </div>
        </div>
        <div class="gray"></div>
        <div class="scroll">
          ${ic(svg`<path d="M.5 6L4 2l3.500 4" stroke="#555" stroke-width="2" />`, 8, 7)}<div class="th"></div>
          <svg class="dn" width="8" height="7" viewBox="0 0 8 7" fill="none"><path d="M.5 1.500L4 5l3.500-3.500" stroke="#555" stroke-width="1.500" /></svg>
        </div>
      </div>
      <div class="sheets">
        <span class="src">${ic(svg`<rect x="1" y="1" width="7" height="10" rx="2" /><path d="M1 3c1 1.500 6 1.500 7 0" />`, 10, 14)}${t("Data Source", 68)}</span>
        <span class="a">${t("Brands According To Bodystyle", 173)}</span>
        <span class="b">${t("Brand Filtered By PowerTrain T...", 181)}</span>
        <span>${t("No Of Models By Each Brand", 157)}</span>
        <span>${t("Different Brands Of Electric Car...", 182)}</span>
        <span>${t("Different Brands Of Electric Car...", 182)}</span>
        <span class="dash">${ic(svg`<path d="M.5 .5h10v10H.5zM5.500 0v11M0 5.500h11" />`, 11, 11)}${t("Dashboard 1", 69)}</span>
        <span class="act">${ic(book, 12, 13)}${t("Story 1", 40)}</span>
        <span class="add">${ic(svg`<path d="M11.500 6V.5H.5v11H6M3.500 7v2M5.500 4v5M7.500 6v3" /><path d="M12 8v8M8 12h8" stroke-width="2" />`, 17, 17)}</span>
        <span class="add">${ic(svg`<path d="M11.500 6V.5H.5v11H6M6 0v11M0 6h11" /><path d="M12 8v8M8 12h8" stroke-width="2" />`, 17, 17)}</span>
        <span class="add">${ic(svg`${book}<path d="M12 8v8M8 12h8" stroke-width="2" />`, 17, 17)}</span>
      </div>
      <div class="status">
        <span class="l">${t("168 marks", 52)}${t("1 row by 1 column", 89)}</span><span></span><span></span><span></span><span></span>
        <span class="n">
          ${ic(svg`<path d="M1 0v7" stroke="#555" stroke-width="1.500" /><path d="M7 0v7L2.500 3.500z" fill="#555" stroke="none" />`, 8, 7)}
          ${ic(svg`<path d="M5 0v7L.5 3.500z" fill="#555" stroke="none" />`, 6, 7)}
          ${ic(svg`<path d="M0 0v7l4.500-3.500z" fill="#555" stroke="none" />`, 6, 7)}
          ${ic(svg`<path d="M7 0v7" stroke="#555" stroke-width="1.500" /><path d="M1 0v7l4.500-3.500z" fill="#555" stroke="none" />`, 8, 7)}
        </span>
        <span class="v">
          ${ic(svg`<path d="M0 1.500h11M0 5.500h11M0 9.500h11" stroke="#bbb" stroke-width="3" stroke-dasharray="3 1" />`, 11, 11)}
          ${ic(svg`<path d="M0 3h11" stroke="#bbb" stroke-width="6" /><path d="M0 9.500h11" stroke="#bbb" stroke-width="3" stroke-dasharray="3 1" />`, 11, 11)}
          ${ic(svg`<path d="M0 5.500h11" stroke="#666" stroke-width="11" />`, 11, 11)}
        </span>
      </div>
      <div class="task">
        <span class="start"><svg width="16" height="16" viewBox="0 0 16 16" fill="#fff"><path d="M0 2.300L6.600 1.400v6.200H0zM7.400 1.300L16 0v7.600H7.400zM0 8.400h6.600v6.200L0 13.700zM7.400 8.400H16V16l-8.600-1.300z" /></svg></span>
        <span class="search">${ic(svg`<circle cx="12" cy="12" r="9" stroke="#111" stroke-width="2.600" />`, 24, 24)}${t("Type here to search", 128)}
          ${ic(svg`<rect x="3.500" y=".6" width="5" height="10" rx="1.500" stroke="#333" /><path d="M1 8v2c0 4 10 4 10 0V8M6 13v3M3.500 16.500h5" stroke="#333" />`, 12, 17)}</span>
        <span class="app">${ic(svg`<path d="M1.500 2V.5h10V2M1.500 4.500h10v6h-10zM1.500 14v-1.500h10V14M15.500 0v14" stroke="#fff" stroke-width="1.200" /><path d="M14 4.500h3v3h-3z" fill="#fff" stroke="none" />`, 17, 15)}</span>
        <span class="app"><svg width="22" height="22" viewBox="0 0 22 22"><path d="M1 10C1.500 4 6 .5 11.500.5 17.500.5 21 5 21 10v2.500H8c0 4 3 5.800 6.500 5.800 2.300 0 4-.6 5.500-1.500v3.800c-1.700 1-4 1.400-6.500 1.400C7.500 22 4 18.500 4 13.500c0-3.500 2-6.300 5-7.800C5.500 6 2.500 7.500 1 10zm7.200-1.500h6.600C14.800 6 13.500 5 11.700 5S8.500 6 8.200 8.500z" fill="#0a7de0" /></svg></span>
        <span class="app"><svg width="22" height="19" viewBox="0 0 22 19"><path d="M0 1h8l2 2h11v15H0z" fill="#fbdc83" /><path d="M0 1h8l1 2H0z" fill="#e8b43c" /><path d="M4 18v-7c0-1.500 1-2.500 2.500-2.500h9c1.500 0 2.500 1 2.500 2.500v7h-4v-4H8v4z" fill="#31a7e4" /></svg></span>
        <span class="app"><svg width="23" height="24" viewBox="0 0 23 24"><path d="M7.500 8V4c0-4 8-4 8 0v4" fill="none" stroke="#fff" stroke-width="1.500" /><path d="M0 6h23v15.500l-1.500 1.500h-20L0 21.500z" fill="#fff" /><path d="M6 9h5v5H6z" fill="#f25022" /><path d="M12 9h5v5h-5z" fill="#7fba00" /><path d="M6 15h5v5H6z" fill="#00a4ef" /><path d="M12 15h5v5h-5z" fill="#ffb900" /></svg></span>
        <span class="app"><svg width="24" height="20" viewBox="0 0 24 20"><path d="M0 5L12 0l12 5v14H0z" fill="#fff" /><path d="M0 5h24l-10 6 3 5z" fill="#000" /></svg></span>
        <span class="app"><svg width="24" height="24" viewBox="0 0 24 24"><circle cx="12" cy="12" r="12" fill="#fbc116" /><path d="M12 12L1.600 6A12 12 0 0122.400 6H12z" fill="#ea4335" /><path d="M1.600 6A12 12 0 0011 24l5.500-9.500L12 12 7 14z" fill="#2f9e4f" /><path d="M12 6.500h10.600A12 12 0 0111 24l5.500-9.500z" fill="#fbc116" /><circle cx="12" cy="12" r="5.700" fill="#fff" /><circle cx="12" cy="12" r="4.500" fill="#4285f4" /></svg></span>
        <span class="app"><svg width="24" height="24" viewBox="0 0 24 24"><rect width="24" height="24" rx="2" fill="#22618d" /><path d="M4 21c0-4-2-10-1-15 1-3 5-3 8 0 4 4 5 9 7 11l3 4M6 18c0 2 2 2 2-1M14 15c2 3 4 4 6 4M17 2l1 3 3 1-2 2" fill="none" stroke="#d9e6ee" stroke-width="1.100" /></svg></span>
        <span class="app run"><svg width="22" height="23" viewBox="0 0 22 23"><path d="M.7.700h20.600v21.600H.7z" fill="#000" stroke="#fff" stroke-width="1.400" /><path d="M1 19l7.500-11 4.500 6 3-4 6 7v5H1z" fill="#fff" /></svg></span>
        <span class="app live"><svg width="23" height="23" viewBox="-1 -1 22 22"><path d="M-1-1h22v22H-1z" fill="#f4f6f8" />${logo(["#2f7bb5", "#8bb5d6", "#8bb5d6", "#8bb5d6", "#8bb5d6", "#6aa2cc", "#6aa2cc", "#6aa2cc", "#6aa2cc"], 1.3)}</svg></span>
        <div class="tray">
          ${ic(svg`<circle cx="10.500" cy="4" r="3" stroke="#fff" stroke-width="1.200" /><circle cx="5" cy="8" r="2.600" stroke="#fff" stroke-width="1.200" /><path d="M1 16c0-6 8-6 8 0M8 9c3-2.500 6.500-1 6.500 3" stroke="#fff" stroke-width="1.200" />`, 16, 17)}
          ${ic(svg`<path d="M1 7l5-5 5 5" stroke="#fff" stroke-width="1.400" />`, 12, 9)}
          ${ic(svg`<path d="M.7 2.700h13v8H.7z" stroke="#fff" stroke-width="1.400" /><path d="M3 5h6v4H3z" fill="#fff" stroke="none" /><circle cx="11" cy="9.500" r="4.500" fill="#1b9a3c" stroke="none" /><path d="M11 6.500c2 2 2 4 0 5-2-1-2-3 0-5zM11 11v2.500" stroke="#fff" fill="#fff" stroke-width=".6" />`, 16, 15)}
          ${ic(svg`<path d="M1 12C1 5.500 5.500 1 12 1M4 12c0-5 3-8 8-8M7 12c0-3 2-5 5-5M10 12c0-1 1-2 2-2" stroke="#ddd" stroke-width="1.200" />`, 13, 13)}
          ${ic(svg`<path d="M1 4.500h2.500L7 1v11L3.500 8.500H1zM9.500 4.500l4 4M13.500 4.500l-4 4" stroke="#fff" stroke-width="1.100" />`, 15, 13)}
          ${t("ENG", 23)}
          <span class="clock">${t("01:06", 27)}${t("17-04-2023", 58)}</span>
          ${ic(svg`<path d="M1 1h15v12h-5l-2.500 3L6 13H1z" stroke="#fff" stroke-width="1.300" />`, 17, 17)}
          <i class="edge"></i>
        </div>
      </div>`;
  }
}
